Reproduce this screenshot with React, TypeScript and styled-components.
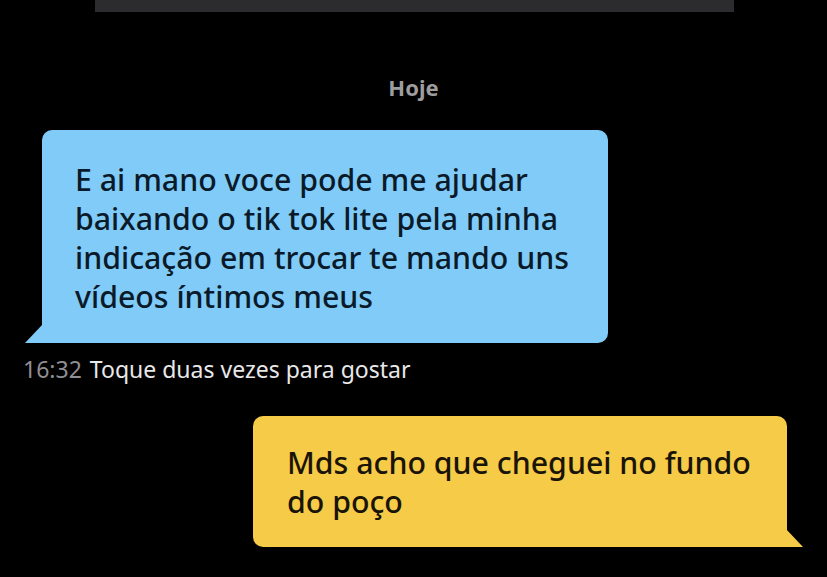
import React from 'react';
import styled, { createGlobalStyle } from 'styled-components';

const GlobalStyle = createGlobalStyle`
  html, body {
    margin: 0;
    padding: 0;
    background: #000;
  }
  body {
    font-family: "Noto Sans", "Open Sans", sans-serif;
  }
`;

const Screen = styled.div`
  width: 827px;
  height: 577px;
  background: #000;
  display: flex;
  flex-direction: column;
  overflow: hidden;
`;

const TopBar = styled.div`
  margin-left: 95px;
  width: 639px;
  height: 12px;
  background: #2c2c2e;
  flex-shrink: 0;
`;

const DayLabel = styled.div`
  margin-top: 60px;
  height: 30px;
  line-height: 30px;
  text-align: center;
  font-size: 22px;
  font-weight: 700;
  color: #9d9d9f;
`;

const Row = styled.div<{ $side: 'left' | 'right' }>`
  display: flex;
  justify-content: ${p => (p.$side === 'left' ? 'flex-start' : 'flex-end')};
  padding: ${p => (p.$side === 'left' ? '0 0 0 42px' : '0 40px 0 0')};
`;

const Bubble = styled.div<{ $side: 'left' | 'right'; $width: number }>`
  position: relative;
  box-sizing: border-box;
  width: ${p => p.$width}px;
  background: ${p => (p.$side === 'left' ? '#80cbf8' : '#f5cb47')};
  color: ${p => (p.$side === 'left' ? '#0a1a28' : '#1a1408')};
  font-size: 30.3px;
  font-weight: 500;
  line-height: 39px;
  white-space: nowrap;
  border-radius: ${p => (p.$side === 'left' ? '10px 10px 10px 0' : '10px 10px 0 10px')};
  padding: ${p => (p.$side === 'left' ? '30px 20px 27px 33px' : '27px 20px 26px 34px')};

  &::after {
    content: '';
    position: absolute;
    bottom: 0;
    width: 17px;
    height: 18px;
    background: inherit;
    ${p =>
      p.$side === 'left'
        ? 'left: -17px; clip-path: polygon(100% 0, 0 100%, 100% 100%);'
        : 'right: -16px; clip-path: polygon(0 0, 100% 100%, 0 100%);'}
  }
`;

const BlueRow = styled(Row)`
  margin-top: 28px;
`;

const Meta = styled.div`
  margin-top: 12px;
  padding-left: 23px;
  font-size: 23px;
  line-height: 28px;
  display: flex;
  gap: 8px;
`;

const Time = styled.span`
  color: #8e8e93;
`;

const Hint = styled.span`
  color: #e8e8e8;
`;

const YellowRow = styled(Row)`
  margin-top: 33px;
`;

export default function App() {
  return (
    <Screen>
      <GlobalStyle />
      <TopBar />
      <DayLabel>Hoje</DayLabel>
      <BlueRow $side="left">
        <Bubble $side="left" $width={566}>
          E ai mano voce pode me ajudar
          <br />
          baixando o tik tok lite pela minha
          <br />
          indicação em trocar te mando uns
          <br />
          vídeos íntimos meus
        </Bubble>
      </BlueRow>
      <Meta>
        <Time>16:32</Time>
        <Hint>Toque duas vezes para gostar</Hint>
      </Meta>
      <YellowRow $side="right">
        <Bubble $side="right" $width={534}>
          Mds acho que cheguei no fundo
          <br />
          do poço
        </Bubble>
      </YellowRow>
    </Screen>
  );
}
